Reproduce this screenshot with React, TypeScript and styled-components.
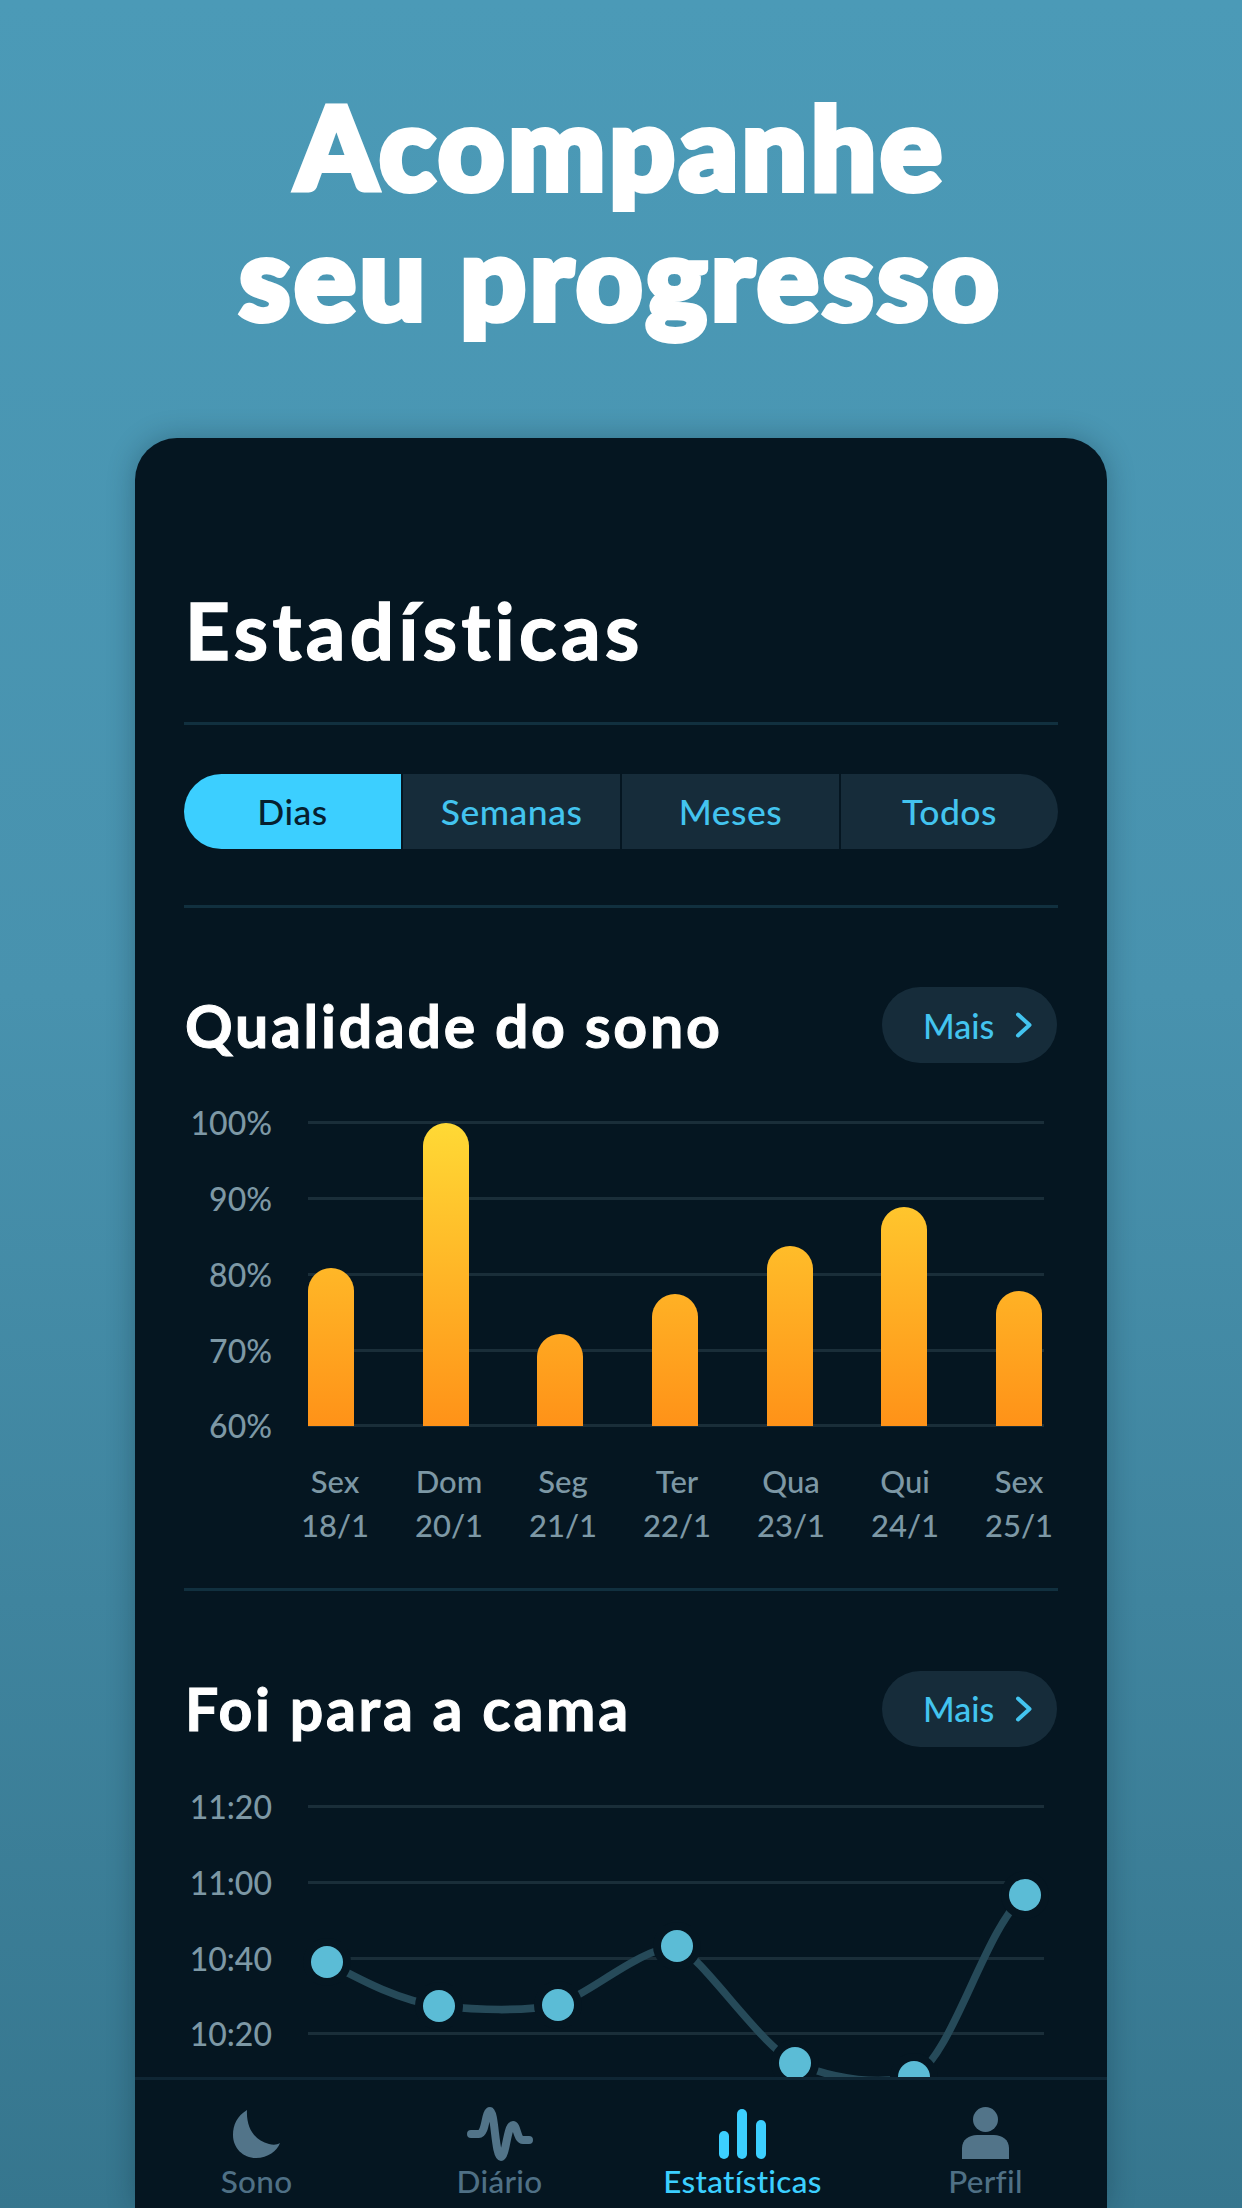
import React from 'react';
import styled, { createGlobalStyle } from 'styled-components';

const FONT = `Lato, "Open Sans", sans-serif`;

const GlobalStyle = createGlobalStyle`
  html, body { margin: 0; padding: 0; }
  body {
    font-family: ${FONT};
    font-variant-ligatures: none;
    background: #3f88a3;
  }
`;

const Page = styled.div`
  width: 1242px;
  height: 2208px;
  overflow: hidden;
  display: flex;
  flex-direction: column;
  background: linear-gradient(180deg, #4b9ab7 0%, #4892ae 45%, #36768e 100%);
`;

const Headline = styled.h1`
  margin: 0;
  padding-top: 80px;
  font-size: 115px;
  line-height: 130px;
  font-weight: 900;
  letter-spacing: 4px;
  text-align: center;
  color: #fff;
  -webkit-text-stroke: 6px #fff;
  paint-order: stroke fill;
  stroke-linejoin: round;
`;

const Card = styled.div`
  flex: 1;
  min-height: 0;
  margin: 98px 135px 0;
  display: flex;
  flex-direction: column;
  border-radius: 42px 42px 0 0;
  background: #051621;
  box-shadow: 0 0 28px rgba(0, 20, 30, 0.28);
  overflow: hidden;
`;

const Body = styled.div`
  flex: 1;
  min-height: 0;
  overflow: hidden;
  padding: 147px 49px 0;
`;

const Title = styled.h2`
  margin: 0 0 0 1px;
  font-size: 78px;
  line-height: 90px;
  font-weight: 700;
  letter-spacing: 4.4px;
  color: #fff;
  -webkit-text-stroke: 1.5px #fff;
`;

const Rule = styled.div<{ $top: number; $bottom: number }>`
  height: 3px;
  margin: ${(p) => p.$top}px 0 ${(p) => p.$bottom}px;
  background: #11303f;
`;

const Tabs = styled.div`
  display: grid;
  grid-template-columns: repeat(4, 1fr);
  gap: 2px;
  height: 75px;
  border-radius: 38px;
  overflow: hidden;
`;

const Tab = styled.div<{ $active?: boolean }>`
  display: flex;
  align-items: center;
  justify-content: center;
  font-size: 35.5px;
  font-weight: 500;
  letter-spacing: 0.5px;
  background: ${(p) => (p.$active ? '#3ccfff' : '#162c3a')};
  color: ${(p) => (p.$active ? '#06202f' : '#43c4ef')};
`;

const SectionHead = styled.div`
  display: flex;
  align-items: center;
  justify-content: space-between;
  height: 76px;
  margin-bottom: 22px;
`;

const SectionTitle = styled.h3`
  margin: 0 0 0 1px;
  font-size: 59px;
  font-weight: 700;
  letter-spacing: 2.7px;
  color: #fff;
  -webkit-text-stroke: 1px #fff;
`;

const MoreButton = styled.div`
  width: 175px;
  height: 76px;
  margin-right: 1px;
  box-sizing: border-box;
  padding: 0 24px 0 41px;
  display: flex;
  align-items: center;
  justify-content: space-between;
  border-radius: 38px;
  background: #162c3a;
  color: #43c4ef;
  font-size: 34px;
  font-weight: 500;
`;

const Chart = styled.div`
  position: relative;
`;

const GridRow = styled.div`
  display: flex;
  align-items: center;
  height: 75.75px;
`;

const AxisLabel = styled.span`
  width: 88px;
  flex: none;
  text-align: right;
  font-size: 32px;
  font-weight: 500;
  color: #7d98a5;
`;

const GridLine = styled.div`
  flex: 1;
  height: 3px;
  margin: 0 14px 0 36px;
  background: #1a2e39;
`;

const Bars = styled.div`
  position: absolute;
  left: 124px;
  width: 734px;
  top: 38px;
  height: 303px;
  display: flex;
  justify-content: space-between;
  align-items: flex-end;
`;

const Bar = styled.div`
  width: 46px;
  border-radius: 23px 23px 0 0;
  background: linear-gradient(180deg, #ffd935 0%, #ff9218 100%) bottom / 100% 303px no-repeat;
`;

const DayLabels = styled.div`
  display: flex;
  justify-content: space-between;
  margin: -5px 0 0 128px;
  width: 730px;
`;

const DayLabel = styled.div`
  width: 46px;
  display: flex;
  flex-direction: column;
  align-items: center;
  font-size: 31px;
  font-weight: 500;
  line-height: 44px;
  color: #7d98a5;
  white-space: nowrap;
`;

const LineOverlay = styled.svg`
  position: absolute;
  left: 0;
  top: 0;
  overflow: visible;
`;

const Nav = styled.nav`
  flex: none;
  height: 128px;
  display: grid;
  grid-template-columns: repeat(4, 1fr);
  border-top: 3px solid #0f2634;
  background: #051621;
`;

const NavItem = styled.div<{ $active?: boolean }>`
  display: flex;
  flex-direction: column;
  align-items: center;
  padding-top: 27px;
  font-size: 31.5px;
  font-weight: 500;
  letter-spacing: 0.3px;
  line-height: 40px;
  color: ${(p) => (p.$active ? '#3ccfff' : '#4f7085')};
`;

const NavIcon = styled.svg`
  display: block;
`;

const Chevron = () => (
  <svg width="18" height="26" viewBox="0 0 18 26">
    <path d="M3 2.5 L14.5 13 L3 23.5" fill="none" stroke="#43c4ef" strokeWidth="4" strokeLinecap="round" strokeLinejoin="round" />
  </svg>
);

const More = () => (
  <MoreButton>
    Mais
    <Chevron />
  </MoreButton>
);

const bars = [158, 303, 92, 132, 180, 219, 135];
const days = [
  ['Sex', '18/1'],
  ['Dom', '20/1'],
  ['Seg', '21/1'],
  ['Ter', '22/1'],
  ['Qua', '23/1'],
  ['Qui', '24/1'],
  ['Sex', '25/1'],
];

// points are relative to the chart's top-left corner
const points = [
  [143, 193],
  [255, 237],
  [374, 236],
  [493, 177],
  [611, 294],
  [730, 308],
  [841, 126],
];

const linePath =
  'M143 193 C175 210 215 232 255 237 C295 241 335 243 374 236 C410 222 455 180 493 177 ' +
  'C520 190 575 275 611 294 C650 310 690 316 730 308 C770 285 800 160 841 126';

const NAV_ICON = '#527489';

export default function App() {
  return (
    <Page>
      <GlobalStyle />
      <Headline>
        Acompanhe
        <br />
        seu progresso
      </Headline>
      <Card>
        <Body>
          <Title>Estadísticas</Title>
          <Rule $top={47} $bottom={49} />
          <Tabs>
            <Tab $active>Dias</Tab>
            <Tab>Semanas</Tab>
            <Tab>Meses</Tab>
            <Tab>Todos</Tab>
          </Tabs>
          <Rule $top={56} $bottom={79} />

          <SectionHead>
            <SectionTitle>Qualidade do sono</SectionTitle>
            <More />
          </SectionHead>
          <Chart>
            {['100%', '90%', '80%', '70%', '60%'].map((l) => (
              <GridRow key={l}>
                <AxisLabel>{l}</AxisLabel>
                <GridLine />
              </GridRow>
            ))}
            <Bars>
              {bars.map((h, i) => (
                <Bar key={i} style={{ height: h }} />
              ))}
            </Bars>
          </Chart>
          <DayLabels>
            {days.map(([d, n], i) => (
              <DayLabel key={i}>
                <span>{d}</span>
                <span>{n}</span>
              </DayLabel>
            ))}
          </DayLabels>
          <Rule $top={41} $bottom={80} />

          <SectionHead>
            <SectionTitle>Foi para a cama</SectionTitle>
            <More />
          </SectionHead>
          <Chart>
            {['11:20', '11:00', '10:40', '10:20'].map((l) => (
              <GridRow key={l}>
                <AxisLabel>{l}</AxisLabel>
                <GridLine />
              </GridRow>
            ))}
            <LineOverlay width="874" height="340" viewBox="0 0 874 340">
              <path d={linePath} fill="none" stroke="#264a59" strokeWidth="7.5" />
              {points.map(([x, y], i) => (
                <circle key={i} cx={x} cy={y} r="16" fill="#5bbcd6" stroke="#051621" strokeWidth="16" paintOrder="stroke" />
              ))}
            </LineOverlay>
          </Chart>
        </Body>
        <Nav>
          <NavItem>
            <NavIcon width="47" height="54" viewBox="0 0 47 54">
              <path d="M14 3 C4 9 0 18 0 28 C0 41 10 51 23 51 C35 51 44 44 47 36 C44 38 40 38 36 37 C22 34 13 21 14 3 Z" fill={NAV_ICON} />
            </NavIcon>
            Sono
          </NavItem>
          <NavItem>
            <NavIcon width="66" height="54" viewBox="0 0 66 54">
              <path
                d="M4 27 H12 C19 27 18 4 23 4 C28 4 28 50 34 50 C39 50 40 18 46 18 C50 18 50 33 56 33 H62"
                fill="none"
                stroke={NAV_ICON}
                strokeWidth="8"
                strokeLinecap="round"
                strokeLinejoin="round"
              />
            </NavIcon>
            Diário
          </NavItem>
          <NavItem $active>
            <NavIcon width="47" height="54" viewBox="0 0 47 54">
              <rect x="0" y="24" width="10" height="28" rx="5" fill="#3ccfff" />
              <rect x="18" y="2" width="10" height="50" rx="5" fill="#3ccfff" />
              <rect x="37" y="13" width="10" height="39" rx="5" fill="#3ccfff" />
            </NavIcon>
            Estatísticas
          </NavItem>
          <NavItem>
            <NavIcon width="47" height="54" viewBox="0 0 47 54">
              <ellipse cx="23.5" cy="12.5" rx="12.5" ry="12.5" fill={NAV_ICON} />
              <path d="M0 52 V41 C0 33 7 28 15 28 H32 C40 28 47 33 47 41 V52 Z" fill={NAV_ICON} />
            </NavIcon>
            Perfil
          </NavItem>
        </Nav>
      </Card>
    </Page>
  );
}
